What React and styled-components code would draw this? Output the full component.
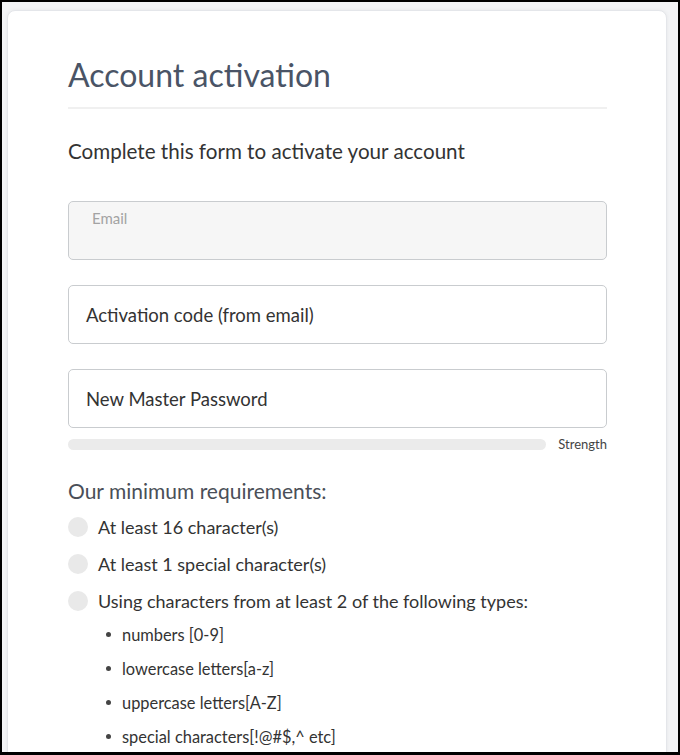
import React from 'react';
import styled, { createGlobalStyle } from 'styled-components';

const GlobalStyle = createGlobalStyle`
    html, body {
        margin:0;
        padding:0;
        background:#ffffff;
    }
    * {
        box-sizing:border-box;
    }
`

const Frame = styled.div`
    width:680px;
    height:755px;
    border:2px solid #000;
    border-bottom-width:3px;
    background-color:#f3f4f6;
    padding:8px 11px 0 5px;
    overflow:hidden;
    font-family:Lato, "Open Sans", sans-serif;
`

const Card = styled.div`
    background-color:#ffffff;
    border:1px solid #e4e6ea;
    border-radius:8px;
    box-shadow:0 0 4px rgba(0,0,0,0.06);
    padding:44px 59px 40px 60px;
    min-height:800px;
`

const Title = styled.h1`
    margin:0;
    font-size:32px;
    line-height:40px;
    font-weight:400;
    color:#4a5466;
    padding-bottom:12px;
    border-bottom:2px solid #f0f0f0;
`

const Subtitle = styled.p`
    margin:30px 0 38px 0;
    font-size:20.6px;
    line-height:24px;
    color:#333;
`

const Fields = styled.div`
    display:flex;
    flex-direction:column;
    gap:25px;
`

const Field = styled.div`
    position:relative;
    height:59px;
    border:1px solid #c9cccf;
    border-radius:5px;
    background-color:${props => props.disabled ? '#f6f6f6' : '#ffffff'};
    display:flex;
    align-items:center;
    padding:0 17px;
    font-size:18.5px;
    color:#333;
`

const FloatLabel = styled.span`
    position:absolute;
    top:7px;
    left:23px;
    font-size:15px;
    color:#a3a3a3;
`

const StrengthRow = styled.div`
    display:flex;
    align-items:center;
    gap:12px;
    margin-top:8px;
`

const StrengthBar = styled.div`
    flex:1;
    height:11px;
    border-radius:6px;
    background-color:#ebebeb;
`

const StrengthText = styled.span`
    font-size:13px;
    color:#444;
`

const ReqTitle = styled.h2`
    margin:27px 0 0 0;
    font-size:21px;
    line-height:24px;
    font-weight:400;
    color:#4a4f58;
`

const ReqList = styled.ul`
    list-style:none;
    margin:5px 0 0 0;
    padding:0;
`

const ReqItem = styled.li`
    display:flex;
    align-items:center;
    gap:10px;
    height:37px;
    font-size:18px;
    color:#333;
`

const Circle = styled.span`
    width:20px;
    height:20px;
    border-radius:50%;
    background-color:#e9e9e9;
    flex-shrink:0;
`

const TypeList = styled.ul`
    list-style:none;
    margin:-2px 0 0 0;
    padding:0 0 0 38px;
`

const TypeItem = styled.li`
    display:flex;
    align-items:center;
    gap:11px;
    height:34px;
    font-size:16.4px;
    color:#333;
`

const Dot = styled.span`
    width:5px;
    height:5px;
    border-radius:50%;
    background-color:#444;
`

const requirements = [
    "At least 16 character(s)",
    "At least 1 special character(s)",
    "Using characters from at least 2 of the following types:",
];

const types = [
    "numbers [0-9]",
    "lowercase letters[a-z]",
    "uppercase letters[A-Z]",
    "special characters[!@#$,^ etc]",
];

const App = () => {
    return (
        <>
        <GlobalStyle />
        <Frame>
            <Card>
                <Title>Account activation</Title>
                <Subtitle>Complete this form to activate your account</Subtitle>
                <Fields>
                    <Field disabled><FloatLabel>Email</FloatLabel></Field>
                    <Field>Activation code (from email)</Field>
                    <Field>New Master Password</Field>
                </Fields>
                <StrengthRow>
                    <StrengthBar />
                    <StrengthText>Strength</StrengthText>
                </StrengthRow>
                <ReqTitle>Our minimum requirements:</ReqTitle>
                <ReqList>
                    {requirements.map(r => (
                        <ReqItem key={r}><Circle />{r}</ReqItem>
                    ))}
                </ReqList>
                <TypeList>
                    {types.map(t => (
                        <TypeItem key={t}><Dot />{t}</TypeItem>
                    ))}
                </TypeList>
            </Card>
        </Frame>
        </>
    );
};

export default App;
